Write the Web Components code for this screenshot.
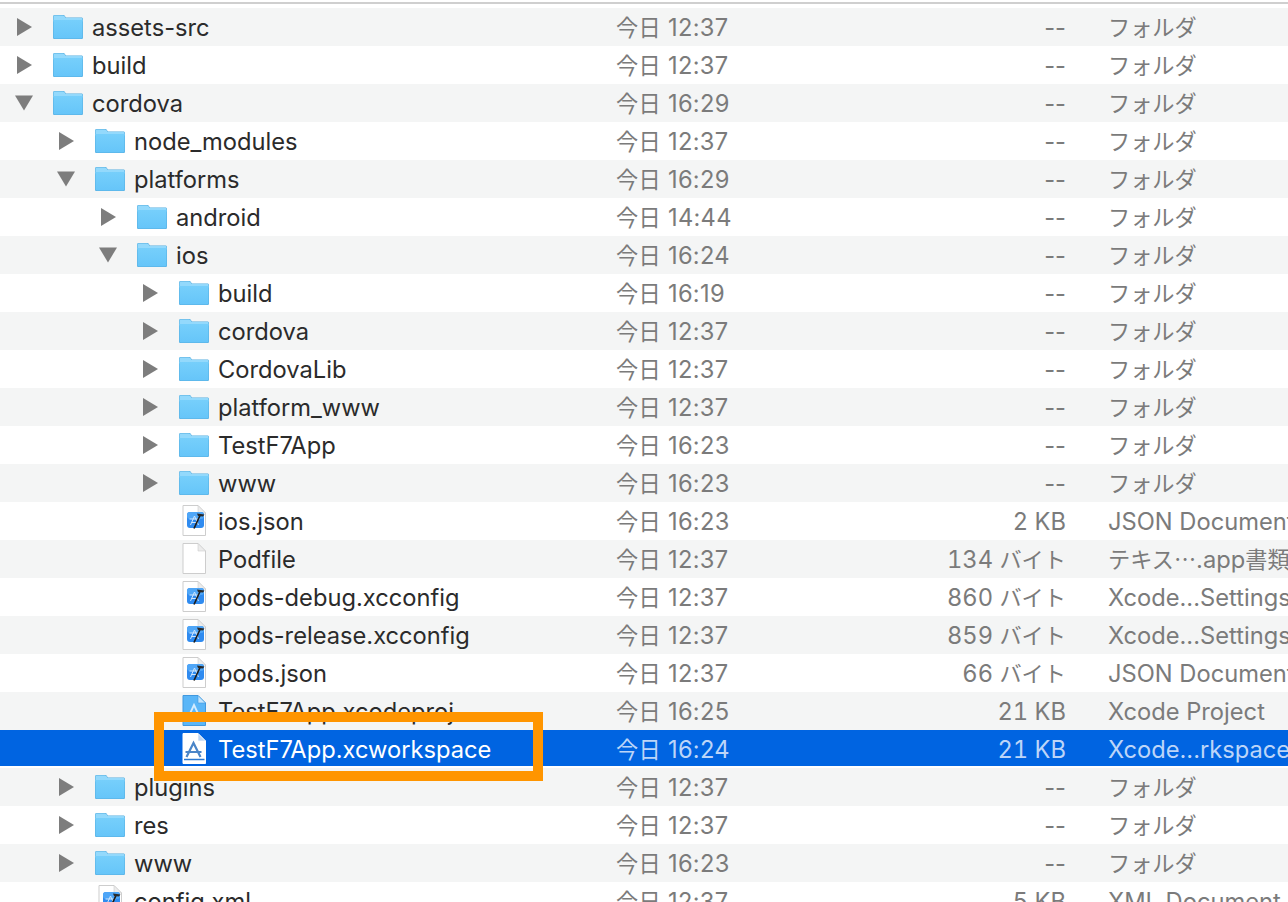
<!DOCTYPE html>
<html lang="ja">
<head>
<meta charset="utf-8">
<title>Finder</title>
<style>
  html, body { margin: 0; height: 902px; overflow: hidden; background: #fff; }
  body { font: 24px Inter, "Noto Sans CJK JP", sans-serif; }
</style>
</head>
<body>
<finder-list></finder-list>

<script>
// folder icon, 30x24
class FolderIcon extends HTMLElement {
    constructor() {
        super();
        this.attachShadow({mode: "open"}).innerHTML = `
<style>
    :host { display: block; width: 30px; height: 24px; }
    svg { display: block; }
</style>
<svg width="30" height="25" viewBox="0 0 30 25">
    <defs>
        <linearGradient id="body" x1="0" y1="0" x2="0" y2="1">
            <stop offset="0" stop-color="#76cffb"/>
            <stop offset="1" stop-color="#66c5f9"/>
        </linearGradient>
    </defs>
    <path d="M1.5 0h8.5c1 0 1.6.5 2.2 1.4l.8 1.1H28.4c.9 0 1.6.7 1.6 1.6v18.3c0 .9-.7 1.6-1.6 1.6H1.6c-.9 0-1.6-.7-1.6-1.6V1.5C0 .7.7 0 1.5 0z" fill="#55addf"/>
    <path d="M1.6 .5h8.3c.8 0 1.3.4 1.8 1.1l1 1.4H28.3c.7 0 1.2.5 1.2 1.2v2.3H.5V1.6C.5 1 1 .5 1.6 .5z" fill="#93d9fc"/>
    <path d="M.5 5h29v17.2c0 .7-.5 1.2-1.2 1.2H1.7c-.7 0-1.2-.5-1.2-1.2z" fill="url(#body)"/>
</svg>`;
    }
}

// page shaped file icon, kind = plain | config | project | workspace
class FileIcon extends HTMLElement {
    constructor() {
        super();
        this.attachShadow({mode: "open"});
    }

    connectedCallback() {
        let kind = this.getAttribute('kind') || 'plain';
        let page = 'M1 .5H16L23.5 8V30.5H1z';
        let fold = 'M16 .5V8H23.5z';
        let inner = '';
        let pageFill = '#fff';
        let pageStroke = '#cdcdcd';
        let foldFill = '#ececec';

        if (kind == 'config') {
            inner = `
    <rect x="5" y="7" width="17" height="16" rx="3" fill="#2f8bf0"/>
    <rect x="5" y="7" width="17" height="7" rx="3" fill="#4fa6f7"/>
    <path d="M8.5 20L12.5 11L16.5 20M9.5 17.5H15.5M7.5 14H17.5" fill="none" stroke="#cfe6fd" stroke-width="1"/>
    <path d="M12 23.5L18 10.5" stroke="#1c1c1c" stroke-width="1.7"/>
    <path d="M15 8.5L22.5 9.5L21 11.5L16 11z" fill="#2a2a2a"/>`;
        } else if (kind == 'project') {
            pageFill = '#5ab6f8';
            pageStroke = '#4198de';
            foldFill = '#c4e5fd';
            inner = `
    <path d="M5 25L12 10L19 25M4 19H20" fill="none" stroke="#d4ecfe" stroke-width="1.8"/>`;
        } else if (kind == 'workspace') {
            pageStroke = '#ffffff';
            foldFill = '#bcd4f3';
            inner = `
    <path d="M4.5 24L11.5 10L18.5 24M3.5 19H19.5" fill="none" stroke="#4a85c8" stroke-width="2.2"/>
    <path d="M2 26.5H22.5" stroke="#2b78d0" stroke-width="1.5"/>`;
        }

        this.shadowRoot.innerHTML = `
<style>
    :host { display: block; width: 24px; height: 32px; }
    svg { display: block; }
</style>
<svg width="24" height="32" viewBox="0 0 24 32">
    <path d="${page}" fill="${pageFill}" stroke="${pageStroke}"/>
    <path d="${fold}" fill="${foldFill}" stroke="${pageStroke}" stroke-width=".6"/>${inner}
</svg>`;
    }
}

// grey disclosure triangle
class DiscloseArrow extends HTMLElement {
    constructor() {
        super();
        this.attachShadow({mode: "open"});
    }

    connectedCallback() {
        let open = this.hasAttribute('open');
        this.shadowRoot.innerHTML = `
<style>
    :host { display: block; width: 18px; height: 18px; }
    svg { display: block; }
</style>
<svg width="18" height="18" viewBox="0 0 18 18">
    <path d="${open ? 'M0 1.5H18L9 16.5z' : 'M2 0L17 9L2 18z'}" fill="#7d7d7d"/>
</svg>`;
    }
}

let finderRow = document.createElement('template');
finderRow.innerHTML = `
<style>
    :host {
        display: grid;
        grid-template-columns: 616px 300px 150px 222px;
        height: 38px;
        line-height: 36px;
        align-items: center;
        color: #7b7b7b;
        background: #fff;
        white-space: nowrap;
        font-size: 23.7px;
    }

    :host([stripe]) { background: #f4f5f5; }

    :host([selected]) {
        color: #bcd5f8;
        background: linear-gradient(#0064e1 36px, #fff 36px);
    }

    .name {
        display: flex;
        align-items: center;
        color: #2b2b2b;
        height: 100%;
    }

    :host([selected]) .name { color: #fff; }

    .arrow {
        width: 37px;
        margin-left: 15px;
        flex: none;
    }

    .icon {
        width: 30px;
        margin-left: 1px;
        margin-right: 9px;
        flex: none;
        display: flex;
        justify-content: center;
    }

    .label, .date, .size, .kind { padding-top: 2px; }
    .date { letter-spacing: .3px; }
    .size { text-align: right; font-variant-numeric: tabular-nums; }
    .size.empty { font-variant-numeric: normal; }
    .kind { padding-left: 42px; overflow: hidden; }

    /* Japanese runs sit tighter than the latin text around them */
    .cjk { font-size: 22.2px; }
</style>
<div class="name">
    <div class="arrow"><slot name="arrow"></slot></div>
    <div class="icon"><slot name="icon"></slot></div>
    <div class="label"><slot></slot></div>
</div>
<div class="date"></div>
<div class="size"></div>
<div class="kind"></div>
`

class FinderRow extends HTMLElement {
    constructor() {
        super();
        this.shadow = this.attachShadow({mode: "open"});
        this.shadow.append(finderRow.content.cloneNode(true));
    }

    connectedCallback() {
        let depth = Number(this.getAttribute('depth') || 0);
        this.shadow.querySelector('.name').style.paddingLeft = (depth * 42) + 'px';
        this.fill('.date', this.getAttribute('date'));
        this.fill('.size', this.getAttribute('size') || '--');
        this.fill('.kind', this.getAttribute('kind') || 'フォルダ');
        if (!this.hasAttribute('size')) this.shadow.querySelector('.size').classList.add('empty');
    }

    fill(selector, text) {
        let cell = this.shadow.querySelector(selector);
        text.split(/([\u2026\u22ef\u3000-\u9fff]+)/).forEach((part, i) => {
            if (!part) return;
            if (i % 2 == 0) {
                cell.append(part);
            } else {
                let span = document.createElement('span');
                span.className = 'cjk';
                span.textContent = part;
                cell.append(span);
            }
        });
    }
}

// name, depth, state (c closed, o open, or file icon kind), time, size, kind
const ROWS = [
    ['assets-src', 0, 'c', '12:37'],
    ['build', 0, 'c', '12:37'],
    ['cordova', 0, 'o', '16:29'],
    ['node_modules', 1, 'c', '12:37'],
    ['platforms', 1, 'o', '16:29'],
    ['android', 2, 'c', '14:44'],
    ['ios', 2, 'o', '16:24'],
    ['build', 3, 'c', '16:19'],
    ['cordova', 3, 'c', '12:37'],
    ['CordovaLib', 3, 'c', '12:37'],
    ['platform_www', 3, 'c', '12:37'],
    ['TestF7App', 3, 'c', '16:23'],
    ['www', 3, 'c', '16:23'],
    ['ios.json', 3, 'config', '16:23', '2 KB', 'JSON Document'],
    ['Podfile', 3, 'plain', '12:37', '134 バイト', 'テキス⋯.app書類'],
    ['pods-debug.xcconfig', 3, 'config', '12:37', '860 バイト', 'Xcode...Settings'],
    ['pods-release.xcconfig', 3, 'config', '12:37', '859 バイト', 'Xcode...Settings'],
    ['pods.json', 3, 'config', '12:37', '66 バイト', 'JSON Document'],
    ['TestF7App.xcodeproj', 3, 'project', '16:25', '21 KB', 'Xcode Project'],
    ['TestF7App.xcworkspace', 3, 'workspace', '16:24', '21 KB', 'Xcode...rkspace'],
    ['plugins', 1, 'c', '12:37'],
    ['res', 1, 'c', '12:37'],
    ['www', 1, 'c', '16:23'],
    ['config.xml', 1, 'config', '12:37', '5 KB', 'XML Document']
];

let finderList = document.createElement('template');
finderList.innerHTML = `
<style>
    :host {
        display: block;
        position: relative;
        height: 902px;
        overflow: hidden;
    }

    .top {
        height: 8px;
        box-sizing: border-box;
        padding-top: 2px;
    }

    .top div {
        height: 2px;
        background: #cfcfcf;
    }

    /* the orange marker drawn over the screenshot */
    .marker {
        position: absolute;
        left: 154px;
        top: 712px;
        width: 389px;
        height: 69px;
        box-sizing: border-box;
        border: 10px solid #ff9500;
    }
</style>
<div class="top"><div></div></div>
<div class="rows"></div>
<div class="marker"></div>
`

class FinderList extends HTMLElement {
    constructor() {
        super();
        this.shadow = this.attachShadow({mode: "open"});
        this.shadow.append(finderList.content.cloneNode(true));
    }

    connectedCallback() {
        let rows = this.shadow.querySelector('.rows');
        ROWS.forEach((r, i) => {
            let row = document.createElement('finder-row');
            row.setAttribute('depth', r[1]);
            row.setAttribute('date', '今日 ' + r[3]);
            if (r[4]) row.setAttribute('size', r[4]);
            if (r[5]) row.setAttribute('kind', r[5]);
            if (i % 2 == 0) row.setAttribute('stripe', '');
            if (i == 19) row.setAttribute('selected', '');

            if (r[2] == 'c' || r[2] == 'o') {
                let arrow = document.createElement('disclose-arrow');
                arrow.slot = 'arrow';
                if (r[2] == 'o') arrow.setAttribute('open', '');
                row.append(arrow);
                let icon = document.createElement('folder-icon');
                icon.slot = 'icon';
                row.append(icon);
            } else {
                let icon = document.createElement('file-icon');
                icon.slot = 'icon';
                icon.setAttribute('kind', r[2]);
                row.append(icon);
            }
            row.append(r[0]);
            rows.append(row);
        });
    }
}

window.customElements.define('folder-icon', FolderIcon);
window.customElements.define('file-icon', FileIcon);
window.customElements.define('disclose-arrow', DiscloseArrow);
window.customElements.define('finder-row', FinderRow);
window.customElements.define('finder-list', FinderList);
</script>
</body>
</html>
